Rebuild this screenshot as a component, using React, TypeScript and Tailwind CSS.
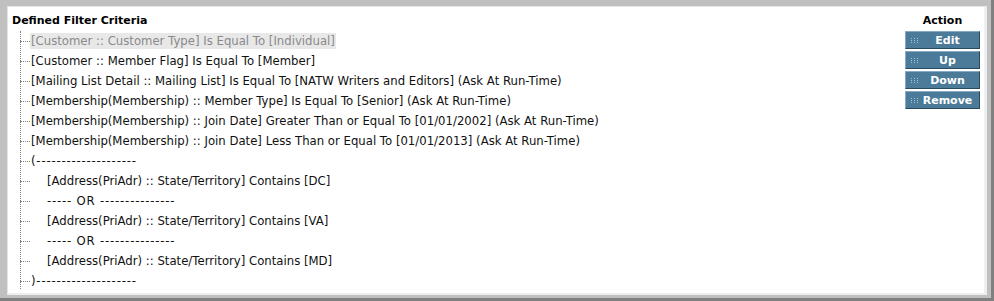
import React from "react";

type Row = { text: string; indent?: boolean; disabled?: boolean; dashes?: boolean };

const rows: Row[] = [
  { text: "[Customer :: Customer Type] Is Equal To [Individual]", disabled: true },
  { text: "[Customer :: Member Flag] Is Equal To [Member]" },
  { text: "[Mailing List Detail :: Mailing List] Is Equal To [NATW Writers and Editors] (Ask At Run-Time)" },
  { text: "[Membership(Membership) :: Member Type] Is Equal To [Senior] (Ask At Run-Time)" },
  { text: "[Membership(Membership) :: Join Date] Greater Than or Equal To [01/01/2002] (Ask At Run-Time)" },
  { text: "[Membership(Membership) :: Join Date] Less Than or Equal To [01/01/2013] (Ask At Run-Time)" },
  { text: "(--------------------", dashes: true },
  { text: "[Address(PriAdr) :: State/Territory] Contains [DC]", indent: true },
  { text: "----- OR ---------------", indent: true, dashes: true },
  { text: "[Address(PriAdr) :: State/Territory] Contains [VA]", indent: true },
  { text: "----- OR ---------------", indent: true, dashes: true },
  { text: "[Address(PriAdr) :: State/Territory] Contains [MD]", indent: true },
  { text: ")--------------------", dashes: true },
];

const actions = ["Edit", "Up", "Down", "Remove"];

function Grip() {
  return (
    <span className="grid grid-cols-3 gap-[1px] w-[8px] shrink-0">
      {Array.from({ length: 9 }).map((_, i) => (
        <span key={i} className="w-[1px] h-[1px] bg-[#9fc0d6]" />
      ))}
    </span>
  );
}

function ActionButton({ label }: { label: string }) {
  return (
    <button className="flex items-center w-[75px] h-[18px] pl-[5px] pr-[3px] bg-[#4b7b99] border border-t-[#86aac2] border-l-[#86aac2] border-b-[#2c4a5c] border-r-[#2c4a5c] text-white font-bold text-[11px] leading-none">
      <Grip />
      <span className="flex-1 text-center">{label}</span>
    </button>
  );
}

export default function App() {
  return (
    <div
      className="w-[994px] h-[301px] bg-[#c0c0c0] border-r-[3px] border-b-[3px] border-[#808080] pt-[6px] pl-[7px] pr-[4px] pb-[3px]"
      style={{ fontFamily: "'DejaVu Sans', Verdana, sans-serif" }}
    >
      <div className="h-full bg-white border-l border-t border-[#e4e4e4] border-r-[3px] border-r-[#eef0ef] border-b-[2px] border-b-[#eef0ef] flex">
        {/* criteria tree */}
        <div className="flex-1 pl-[4px] pt-[7px]">
          <div className="h-[14px] text-[11px] font-bold text-black leading-[14px]">Defined Filter Criteria</div>
          <div className="relative mt-[3px] ml-[8px]">
            <div className="absolute left-0 top-0 h-[258px] border-l border-dotted border-[#808080]" />
            {rows.map((r, i) => (
              <div key={i} className="flex items-center h-[20px]">
                <span className="w-[10px] shrink-0 border-t border-dotted border-[#808080]" />
                <span
                  className={
                    "whitespace-nowrap text-[11.7px] leading-[16px] px-[1px] " +
                    (r.indent ? "ml-[16px] " : "") +
                    (r.dashes ? "tracking-[0.8px] " : "") +
                    (r.disabled ? "bg-[#e8e8e8] text-[#8a8a8a]" : "text-[#111]")
                  }
                >
                  {r.text}
                </span>
              </div>
            ))}
          </div>
        </div>
        {/* actions */}
        <div className="w-[80px] pt-[7px] flex flex-col items-start">
          <div className="w-[75px] text-center h-[14px] text-[11px] font-bold text-black leading-[14px] pl-[2px]">Action</div>
          <div className="mt-[3px] ml-[1px] flex flex-col gap-[2px]">
            {actions.map((a) => (
              <ActionButton key={a} label={a} />
            ))}
          </div>
        </div>
      </div>
    </div>
  );
}
